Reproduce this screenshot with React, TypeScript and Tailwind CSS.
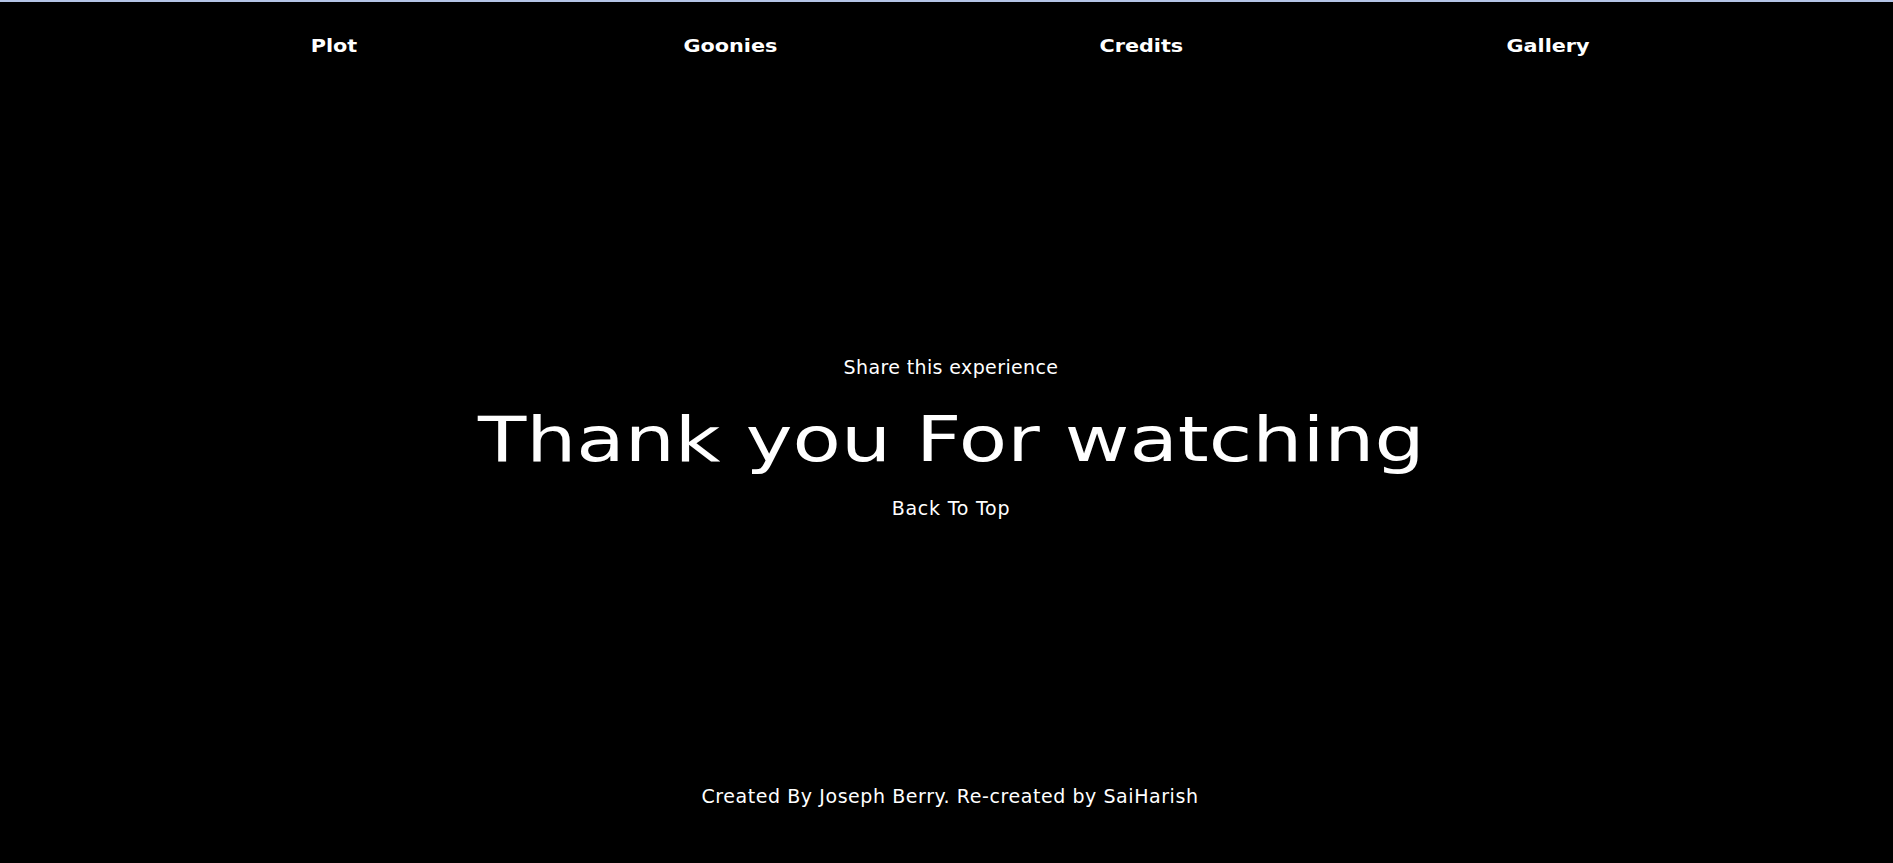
import React from 'react';

const navItems = ['Plot', 'Goonies', 'Credits', 'Gallery'];

const App: React.FC = () => {
  return (
    <div className="h-screen w-full flex flex-col bg-black text-white border-t-2 border-[#b4c4e6] overflow-hidden">
      {/* Nav */}
      <nav className="h-[90px] flex items-center justify-around pl-[146px] pr-[142px] font-['DejaVu_Sans',sans-serif] font-bold text-[17px]">
        {navItems.map((item) => (
          <a key={item} href="#" className="inline-block scale-x-[1.22] text-white">
            {item}
          </a>
        ))}
      </nav>

      {/* Main */}
      <main className="flex-1 flex flex-col items-center justify-center pl-[9px] font-['DejaVu_Sans',sans-serif]">
        <p className="text-[19px] leading-6 tracking-[0.02em]">Share this experience</p>
        <h1 className="mt-[25px] inline-block scale-x-[1.275] text-[62px] leading-[72px] font-normal">
          Thank you For watching
        </h1>
        <a href="#" className="mt-[20px] text-[19px] leading-6 tracking-[0.04em] text-white">
          Back To Top
        </a>
      </main>

      {/* Footer */}
      <footer className="pb-[53px] pl-[7px] flex justify-center font-['DejaVu_Sans',sans-serif] text-[19px] leading-7 tracking-[0.03em]">
        Created By Joseph Berry. Re-created by SaiHarish
      </footer>
    </div>
  );
};

export default App;
